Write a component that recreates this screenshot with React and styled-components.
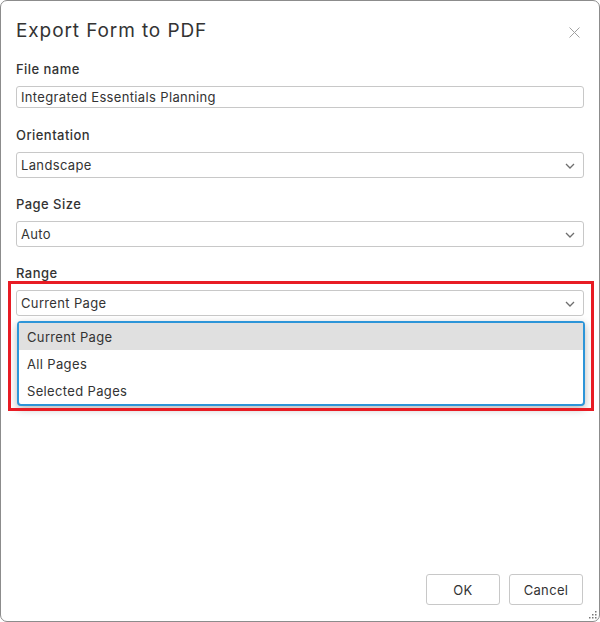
import React from 'react'
import styled, { createGlobalStyle } from 'styled-components'

const GlobalStyle = createGlobalStyle`
  html, body {
    margin: 0;
    padding: 0;
    background: #fff;
  }
  body {
    font-family: "Inter", "Liberation Sans", sans-serif;
    color: #333;
  }
`

const Dialog = styled.div`
  position: relative;
  box-sizing: border-box;
  width: 600px;
  height: 622px;
  border: 1px solid #8c8c8c;
  border-radius: 7px;
  background: #fff;
  display: flex;
  flex-direction: column;
  padding: 14px 15px 16px 15px;
`

const Header = styled.div`
  display: flex;
  align-items: center;
  justify-content: space-between;
  height: 30px;
`

const Title = styled.h1`
  margin: 0;
  font-size: 19px;
  font-weight: 400;
  color: #333;
  letter-spacing: 0.9px;
`

const CloseButton = styled.button`
  border: none;
  background: none;
  padding: 0;
  margin: 4px 4px 0 0;
  width: 11px;
  height: 11px;
  display: flex;
  cursor: pointer;
`

const Body = styled.div`
  flex: 1;
  margin-top: 14px;
  display: flex;
  flex-direction: column;
`

const Field = styled.div`
  position: relative;
  display: flex;
  flex-direction: column;
  margin-bottom: ${p => p.$gap || 16}px;
`

const Label = styled.label`
  font-size: 13px;
  font-weight: 500;
  line-height: 20px;
  letter-spacing: 0.45px;
  margin-bottom: 7px;
  color: #333;
`

const TextInput = styled.input`
  box-sizing: border-box;
  height: 22px;
  border: 1px solid #c8c8c8;
  border-radius: 3px;
  padding: 0 4px;
  font-family: inherit;
  font-size: 13px;
  letter-spacing: 0.35px;
  color: #333;
  outline: none;
`

const SelectBox = styled.div`
  box-sizing: border-box;
  height: 26px;
  border: 1px solid #c8c8c8;
  border-radius: 3px;
  padding: 0 4px;
  display: flex;
  align-items: center;
  justify-content: space-between;
  font-size: 13px;
  letter-spacing: 0.35px;
  color: #333;
`

const Chevron = styled.svg`
  width: 10px;
  height: 6px;
  margin: 1px 4px 0 0;
`

const OptionList = styled.ul`
  position: absolute;
  top: 58px;
  left: 1px;
  right: -1px;
  margin: 0;
  padding: 0;
  list-style: none;
  border: 2px solid #2d95d8;
  border-radius: 4px;
  background: #fff;
  box-shadow: 0 3px 8px rgba(0, 0, 0, 0.28);
  z-index: 2;
`

const Option = styled.li`
  height: 27px;
  display: flex;
  align-items: center;
  padding-left: 8px;
  font-size: 13px;
  letter-spacing: 0.35px;
  color: #333;
  background: ${p => (p.$active ? '#e0e0e0' : 'transparent')};
`

const Highlight = styled.div`
  position: absolute;
  left: 7px;
  top: 280px;
  width: 586px;
  height: 130px;
  box-sizing: border-box;
  border: 3px solid #e81c24;
  pointer-events: none;
  z-index: 3;
`

const Footer = styled.div`
  display: flex;
  justify-content: flex-end;
  gap: 9px;
  margin-right: 1px;
`

const Button = styled.button`
  box-sizing: border-box;
  width: 74px;
  height: 31px;
  border: 1px solid #c8c8c8;
  border-radius: 3px;
  background: #fff;
  font-family: inherit;
  font-size: 13px;
  letter-spacing: 0.35px;
  color: #333;
  cursor: pointer;
`

const Grip = styled.svg`
  position: absolute;
  right: 2px;
  bottom: 2px;
  width: 8px;
  height: 8px;
`

const ChevronIcon = () => (
  <Chevron viewBox="0 0 10 6">
    <path d="M1 1 L5 5 L9 1" fill="none" stroke="#6e6e6e" strokeWidth="1.3" />
  </Chevron>
)

const SelectField = ({ label, value, children }) => (
  <Field>
    <Label>{label}</Label>
    <SelectBox>
      <span>{value}</span>
      <ChevronIcon />
    </SelectBox>
    {children}
  </Field>
)

export default function App() {
  const ranges = ['Current Page', 'All Pages', 'Selected Pages']
  return (
    <>
      <GlobalStyle />
      <Dialog>
        <Header>
          <Title>Export Form to PDF</Title>
          <CloseButton aria-label="Close">
            <svg viewBox="0 0 11 11" width="11" height="11">
              <path d="M0.5 0.5 L10.5 10.5 M10.5 0.5 L0.5 10.5" stroke="#a0a0a0" strokeWidth="1" />
            </svg>
          </CloseButton>
        </Header>
        <Body>
          <Field $gap={17}>
            <Label>File name</Label>
            <TextInput defaultValue="Integrated Essentials Planning" />
          </Field>
          <SelectField label="Orientation" value="Landscape" />
          <SelectField label="Page Size" value="Auto" />
          <SelectField label="Range" value="Current Page">
            <OptionList>
              {ranges.map((r, i) => (
                <Option key={r} $active={i === 0}>{r}</Option>
              ))}
            </OptionList>
          </SelectField>
        </Body>
        <Footer>
          <Button>OK</Button>
          <Button>Cancel</Button>
        </Footer>
        <Highlight />
        <Grip viewBox="0 0 8 8">
          <g fill="#777">
            <rect x="6" y="0" width="1.5" height="1.5" />
            <rect x="3" y="3" width="1.5" height="1.5" />
            <rect x="6" y="3" width="1.5" height="1.5" />
            <rect x="0" y="6" width="1.5" height="1.5" />
            <rect x="3" y="6" width="1.5" height="1.5" />
            <rect x="6" y="6" width="1.5" height="1.5" />
          </g>
        </Grip>
      </Dialog>
    </>
  )
}
